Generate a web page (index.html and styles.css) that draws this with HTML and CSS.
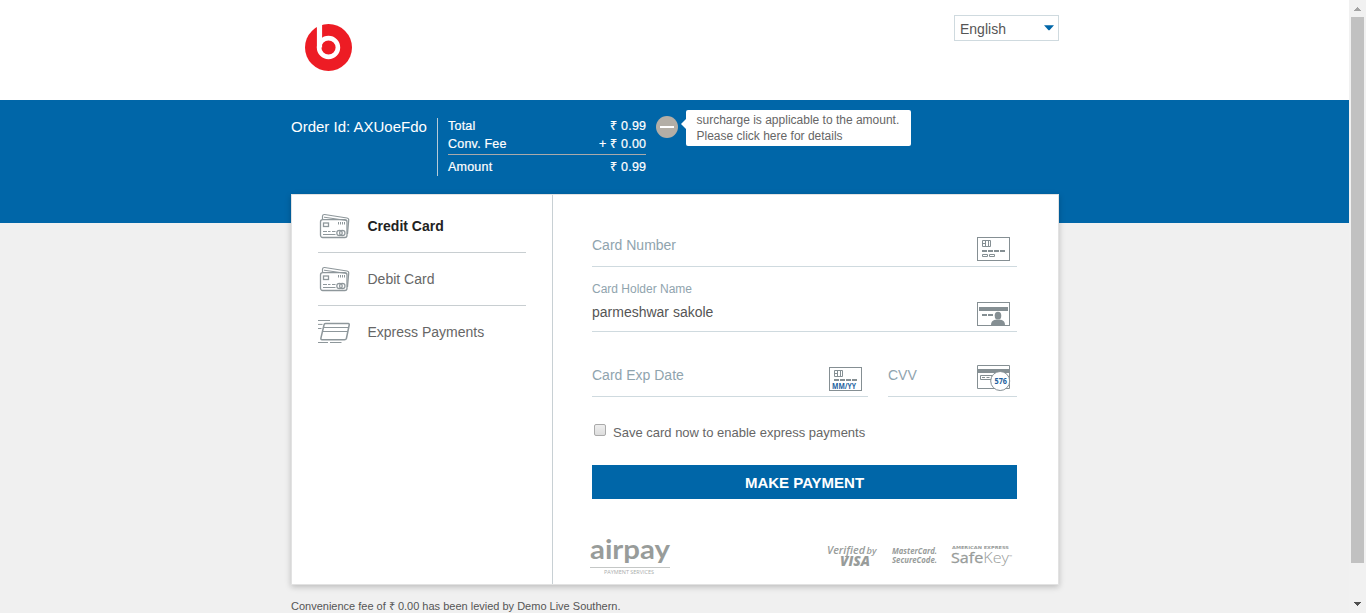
FILE: index.html
```html
<!DOCTYPE html>
<html lang="en">
<head>
<meta charset="utf-8">
<title>Payment</title>
<link rel="stylesheet" href="styles.css">
</head>
<body>
<svg class="defs" width="0" height="0" aria-hidden="true">
  <symbol id="cards" viewBox="0 0 34 30">
    <g fill="none" stroke="#8e979b">
      <path d="M4.500 8V5.200Q4.800 3.300 6.600 3.500L29 7Q31 7.400 30.700 9.400L29.500 23" stroke-width="1.200"/>
      <path d="M6 6.200L28.800 9.500" stroke-width="1"/>
      <rect x="2.500" y="8.700" width="26.500" height="17.800" rx="2.200" stroke-width="1.300"/>
      <rect x="5.500" y="12" width="5" height="3.500" stroke-width="1.300"/>
      <path d="M5 20.500H9M10 20.500H12.500M14 20.500H17.500M5 23.500H17.500M20.500 11V13.500M22.500 11V13.500M24.500 11V13.500M26.500 11V13.500" stroke-width="1"/>
      <circle cx="21.500" cy="22" r="2.700" stroke-width="1.200"/><circle cx="24.300" cy="22" r="2.700" stroke-width="1.200"/>
    </g>
  </symbol>
  <symbol id="express" viewBox="0 0 34 30">
    <g fill="none" stroke="#8e979b">
      <path d="M7.500 6.600H30.200Q31.500 6.800 31.200 8L28.400 21.500Q28 22.700 26.500 22.700H4Q2.600 22.500 2.900 21.200L6 8Q6.300 6.700 7.500 6.600Z" stroke-width="1.500"/>
      <path d="M6 10.500H31M5 14.500H30" stroke-width="1.200"/>
      <path d="M0 3.500H12M0 7.400H4.500M0 11.500H3.500M0 25.500H10M12 25.500H23.500" stroke-width="1"/>
    </g>
  </symbol>
</svg>
<div class="window">
  <div class="page">
    <header class="top">
      <div class="container top-row">
        <svg class="brand" width="47" height="47" viewBox="0 0 47 47">
          <circle cx="23.500" cy="23.500" r="23.500" fill="#ed1c24"/>
          <path d="M14.500 0V23.500" stroke="#fff" stroke-width="5.200"/>
          <circle cx="23.500" cy="23.500" r="9.400" fill="none" stroke="#fff" stroke-width="4.600"/>
        </svg>
        <div class="lang">English<svg width="10" height="6" viewBox="0 0 10 6"><path d="M0 .3H10L5.500 5.300H4.500Z" fill="#0066a8"/></svg></div>
      </div>
    </header>
    <section class="band">
      <div class="container summary">
        <div class="order">Order Id: AXUoeFdo</div>
        <div class="amounts">
          <div class="line"><span>Total</span><span>₹ 0.99</span></div>
          <div class="line"><span>Conv. Fee</span><span>+ ₹ 0.00</span></div>
          <div class="line total"><span>Amount</span><span>₹ 0.99</span></div>
        </div>
        <div class="toggle"></div>
        <div class="tip">surcharge is applicable to the amount.<br>Please click here for details</div>
      </div>
    </section>
    <main class="container card">
      <nav class="methods">
        <div class="method active"><svg width="34" height="30"><use href="#cards"/></svg>Credit Card</div>
        <div class="method"><svg width="34" height="30"><use href="#cards"/></svg>Debit Card</div>
        <div class="method"><svg width="34" height="30"><use href="#express"/></svg>Express Payments</div>
      </nav>
      <section class="form">
        <div class="field first">
          <span class="placeholder">Card Number</span>
          <svg width="33" height="26" viewBox="0 0 33 26" fill="none" stroke="#858f93">
            <rect x=".5" y=".5" width="32" height="23"/>
            <path d="M5.500 3.500H13.500V9.500H5.500ZM8.500 3.500V9.500M11.500 3.500V9.500M5.500 6.500H8.500"/>
            <path d="M5 14H10M11 14H16M17 14H22M23 14H28" stroke-width="2"/>
            <path d="M5.500 17.500H10.500V19.500H5.500ZM12.500 17.500H17.500V19.500H12.500Z"/>
          </svg>
        </div>
        <div class="field">
          <div class="filled"><span class="caption">Card Holder Name</span><span class="value">parmeshwar sakole</span></div>
          <svg width="33" height="26" viewBox="0 0 33 26">
            <rect x=".5" y=".5" width="32" height="23" fill="none" stroke="#858f93"/>
            <g fill="#858f93"><path d="M2 5H31V9H2ZM5 12H10V14H5ZM11 12H16V14H11Z"/><ellipse cx="21" cy="13.700" rx="3.300" ry="3.900"/><path d="M14 23Q14 18.500 18 17.700H24Q28 18.500 28 23Z"/></g>
          </svg>
        </div>
        <div class="pair">
          <div class="field">
            <span class="placeholder">Card Exp Date</span>
            <svg width="33" height="26" viewBox="0 0 33 26" fill="none" stroke="#858f93">
              <rect x=".5" y=".5" width="32" height="23"/>
              <path d="M5.500 3.500H13.500V9.500H5.500ZM8.500 3.500V9.500M11.500 3.500V9.500M5.500 6.500H8.500"/>
              <path d="M5 13H10M11 13H16M17 13H22M23 13H28" stroke-width="2"/>
              <text class="mini" x="3" y="21.500" textLength="24" lengthAdjust="spacingAndGlyphs">MM/YY</text>
            </svg>
          </div>
          <div class="field cvv">
            <span class="placeholder">CVV</span>
            <svg width="34" height="28" viewBox="0 0 34 28" fill="none" stroke="#858f93">
              <path d="M.5 .5H32.500V23.500H.5Z"/><path d="M1 6H32" stroke-width="4"/>
              <path d="M3.500 10.500H15V14.500H3.500ZM5 12.500H8M9.500 12.500H12.500"/>
              <circle cx="23.200" cy="16" r="9.500" fill="#fff"/>
              <text class="mini" x="17.500" y="18.600" textLength="12.500" lengthAdjust="spacingAndGlyphs">576</text>
            </svg>
          </div>
        </div>
        <label class="save"><span class="box"></span>Save card now to enable express payments</label>
        <button class="pay">MAKE PAYMENT</button>
        <div class="logos">
          <svg width="82" height="38" viewBox="0 0 82 38">
            <text class="airpay" x="0" y="20.500" textLength="80" lengthAdjust="spacingAndGlyphs">airpay</text>
            <path d="M0 29.500H80" stroke="#c4c7c6"/>
            <text class="services" x="14" y="36" textLength="50" lengthAdjust="spacingAndGlyphs">PAYMENT SERVICES</text>
          </svg>
          <svg width="190" height="38" viewBox="0 0 190 38">
            <g class="seals">
              <text class="verified" x="0" y="15.500" textLength="38" lengthAdjust="spacingAndGlyphs">Verified</text>
              <text class="by" x="39.500" y="15.500" textLength="10" lengthAdjust="spacingAndGlyphs">by</text>
              <text class="visa" x="13" y="28" textLength="30" lengthAdjust="spacingAndGlyphs">VISA</text>
              <text class="mc" x="65" y="16" textLength="45" lengthAdjust="spacingAndGlyphs">MasterCard.</text>
              <text class="mc" x="65" y="24.500" textLength="45" lengthAdjust="spacingAndGlyphs">SecureCode.</text>
              <text class="amex" x="125" y="10.500" textLength="57" lengthAdjust="spacingAndGlyphs">AMERICAN EXPRESS</text>
              <text class="safe" x="124" y="24.500" textLength="58" lengthAdjust="spacingAndGlyphs">Safe<tspan class="key">Key</tspan></text>
              <text class="tm" x="182" y="20">™</text>
            </g>
          </svg>
        </div>
      </section>
    </main>
    <footer class="container note">Convenience fee of ₹ 0.00 has been levied by Demo Live Southern.</footer>
  </div>
  <aside class="scrollbar">
    <svg width="7" height="4" viewBox="0 0 7 4" shape-rendering="crispEdges"><path d="M3 0H4V1H5V2H6V3H7V4H0V3H1V2H2V1H3Z" fill="#a3a3a3"/></svg>
    <div class="thumb"></div>
    <svg class="down" width="7" height="4" viewBox="0 0 7 4" shape-rendering="crispEdges"><path d="M0 0H7V1H6V2H5V3H4V4H3V3H2V2H1V1H0Z" fill="#505050"/></svg>
  </aside>
</div>
</body>
</html>
```

FILE: styles.css
```css
* { box-sizing: border-box; }
body { margin: 0; font-family: "Liberation Sans", Arial, sans-serif; color: #666; }
svg { display: block; flex: none; }
.defs { position: absolute; }
.window { display: grid; grid-template-columns: 1fr 17px; height: 613px; overflow: hidden; }
.page { background: #f0f0f0; height: 613px; overflow: hidden; white-space: nowrap; }
.container { width: 768px; margin-left: 291px; }
.top { height: 100px; background: #fff; }
.top-row { display: flex; justify-content: space-between; align-items: flex-start; padding-left: 14px; }
.brand { margin-top: 24px; }
.lang { display: flex; justify-content: space-between; width: 105px; height: 26px; margin-top: 15px; padding: 0 4px 0 5px; border: 1px solid #cfdadf; font-size: 14px; line-height: 27px; color: #555; }
.lang svg { margin-top: 9px; }
.band { height: 123px; background: #0066a8; color: #fff; }
.summary { display: flex; align-items: flex-start; }
.order { width: 147px; height: 58px; margin-top: 18px; border-right: 1px solid #b5cbd8; font-size: 15px; line-height: 18px; }
.amounts { width: 198px; margin: 17px 0 0 10px; font-size: 12.500px; -webkit-text-stroke: .2px #fff; letter-spacing: .22px; }
.line { display: flex; justify-content: space-between; line-height: 18px; }
.line span:last-child { margin-right: -.3px; }
.total { margin-top: 1px; padding-top: 3px; border-top: 1px solid #aaa; }
.toggle { display: flex; align-items: center; justify-content: center; width: 22px; height: 22px; margin: 16px 0 0 10px; border-radius: 50%; background: #b3aea6; }
.toggle::before { content: ""; width: 14px; height: 2px; background: #fff; }
.tip { position: relative; width: 225px; height: 36px; margin: 10px 0 0 8px; padding: 2px 0 0 10.500px; border-radius: 2px; background: #fff; color: #666; font-size: 12px; line-height: 16px; }
.tip::before { content: ""; position: absolute; left: -5px; top: 9px; border: 5px solid transparent; border-left: 0; border-right-color: #fff; }
.card { display: flex; height: 391px; margin-top: -29px; background: #fff; border: 1px solid #e2e2e2; box-shadow: 0 2px 6px rgba(0,0,0,.22); position: relative; }
.methods { width: 261px; padding: 5px 26px 0; border-right: 1px solid #c8d0d4; }
.method { display: flex; align-items: center; height: 53px; border-bottom: 1px solid #c8ced1; font-size: 14px; gap: 15.500px; }
.method:last-child { border-color: transparent; }
.active { font-weight: bold; color: #222; }
.form { padding: 7px 41px 0 39px; flex: 1; }
.field { display: flex; justify-content: space-between; align-items: flex-end; height: 65px; padding-right: 7px; border-bottom: 1px solid #cfdadf; }
.field svg { margin-bottom: 3px; }
.placeholder { color: #90a4ae; font-size: 14px; line-height: 20px; margin-bottom: 11px; }
.filled { display: flex; flex-direction: column; }
.caption { font-size: 12px; line-height: 16px; color: #90a4ae; margin-bottom: 5px; }
.value { font-size: 14px; line-height: 20px; color: #555; margin-bottom: 9px; }
.pair { display: flex; justify-content: space-between; }
.pair .field { width: 276px; padding-right: 6px; }
.pair .field.cvv { width: 129px; }
.mini { font: bold 8px "Open Sans", sans-serif; fill: #235f9e; stroke: none; }
.save { display: flex; align-items: center; height: 20px; margin-top: 25px; padding-left: 2px; gap: 7px; font-size: 13px; }
.box { width: 12px; height: 12px; margin-top: -4px; border: 1px solid #aaa; border-radius: 2px; background: linear-gradient(#eee, #ddd); }
.pay { display: block; width: 425px; height: 34px; margin-top: 23px; padding: 1px 0 0; border: 0; background: #0066a8; color: #fff; font: bold 15px "Liberation Sans", Arial, sans-serif; }
.logos { display: flex; justify-content: space-between; margin: 39px 0 0 -2px; }
.airpay { font: bold 27px Lato, sans-serif; fill: #989c9a; }
.services { font: 5px "Open Sans", sans-serif; fill: #a9acab; }
.seals { fill: #989c9a; font-family: "Open Sans", sans-serif; }
.verified { font: italic 600 11px "Open Sans", sans-serif; }
.by { font: italic 600 9.500px "Open Sans", sans-serif; }
.visa { font: italic 800 13.500px "Open Sans", sans-serif; }
.mc { font: italic bold 9px "Open Sans", sans-serif; }
.amex { font: bold 4px "DejaVu Sans", sans-serif; }
.safe { font: 400 15px "Open Sans", sans-serif; stroke: #989c9a; stroke-width: .3px; }
.key { font-weight: 300; stroke: none; }
.tm { font-size: 4px; }
.note { margin-top: 14px; font-size: 11px; line-height: 14px; color: #555; }
.scrollbar { display: flex; flex-direction: column; align-items: center; padding-top: 7px; background: #f1f1f1; }
.thumb { width: 13px; height: 546px; margin-top: 6px; background: #c1c1c1; }
.down { margin-top: 39px; }
```
